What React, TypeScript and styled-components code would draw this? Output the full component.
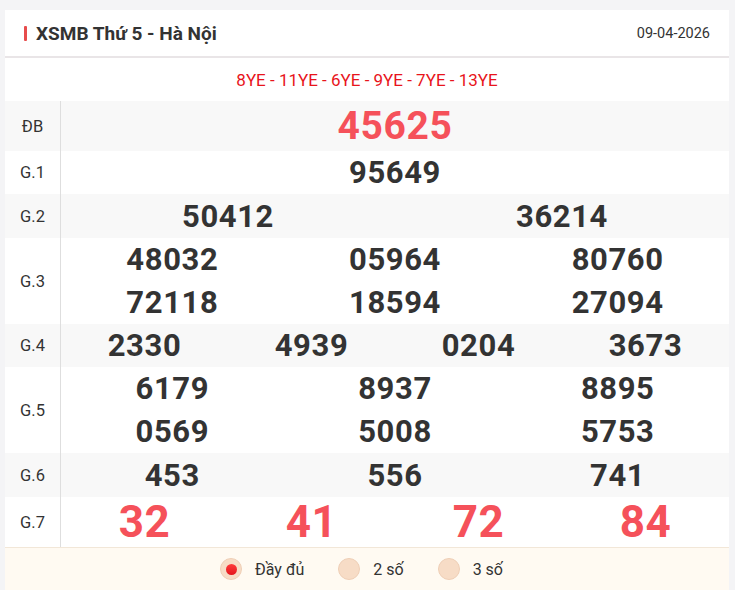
import React from "react";
import styled, { createGlobalStyle } from "styled-components";

const Global = createGlobalStyle`
  html, body { margin: 0; padding: 0; background: #f4f4f6; }
  body { font-family: Roboto, "Noto Sans", sans-serif; color: #333; }
`;

const Page = styled.div`
  padding: 10px 6px 0 5px;
`;

const Card = styled.div`
  background: #fff;
`;

const Header = styled.div`
  display: flex;
  align-items: center;
  justify-content: space-between;
  height: 46px;
  padding: 0 19px 0 19px;
  border-bottom: 2px solid #e9e5e7;
`;

const Title = styled.h2`
  margin: 0;
  display: flex;
  align-items: center;
  gap: 9px;
  font-size: 19px;
  font-weight: 700;
  color: #333;
  &::before {
    content: "";
    width: 3px;
    height: 15px;
    background: #e74c4c;
    border-radius: 1px;
  }
`;

const DateText = styled.span`
  font-size: 14.5px;
  color: #333;
`;

const Codes = styled.div`
  height: 43px;
  display: flex;
  align-items: center;
  justify-content: center;
  font-size: 17px;
  color: #e8141b;
`;

const Table = styled.div`
  display: grid;
  grid-template-columns: 56px 1fr;
`;

const Row = styled.div<{ $alt: boolean }>`
  display: contents;
  & > * {
    background: ${(p) => (p.$alt ? "#f8f8f8" : "#fff")};
  }
`;

const Label = styled.div`
  display: flex;
  align-items: center;
  justify-content: center;
  border-right: 1px solid #dedede;
  font-size: 16.5px;
  color: #333;
`;

const Cells = styled.div<{ $cols: number; $h: number }>`
  display: grid;
  grid-template-columns: repeat(${(p) => p.$cols}, 1fr);
  grid-auto-rows: ${(p) => p.$h}px;
`;

const Num = styled.div<{ $size: number; $red: boolean }>`
  display: flex;
  align-items: center;
  justify-content: center;
  font-size: ${(p) => p.$size}px;
  font-weight: 700;
  color: ${(p) => (p.$red ? "#f5515a" : "#333")};
  letter-spacing: 0.6px;
`;

const Footer = styled.div`
  height: 42px;
  background: #fffaf2;
  border-top: 1px solid #f2e7d8;
  display: flex;
  align-items: center;
  justify-content: center;
  gap: 34px;
  padding-right: 11px;
`;

const Option = styled.label`
  display: flex;
  align-items: center;
  gap: 13px;
  font-size: 16px;
  color: #333;
`;

const Radio = styled.span<{ $on: boolean }>`
  width: 22px;
  height: 22px;
  border-radius: 50%;
  box-sizing: border-box;
  background: #f7dcc6;
  border: 1px solid #efcfb6;
  display: flex;
  align-items: center;
  justify-content: center;
  &::after {
    content: "";
    display: ${(p) => (p.$on ? "block" : "none")};
    width: 11px;
    height: 11px;
    border-radius: 50%;
    background: linear-gradient(#ff3b3b, #e3161c);
  }
`;

type Prize = { label: string; cols: number; nums: string[]; size: number; red?: boolean; h: number };

const prizes: Prize[] = [
  { label: "ĐB", cols: 1, nums: ["45625"], size: 39, red: true, h: 50 },
  { label: "G.1", cols: 1, nums: ["95649"], size: 31, h: 43 },
  { label: "G.2", cols: 2, nums: ["50412", "36214"], size: 31, h: 44 },
  { label: "G.3", cols: 3, nums: ["48032", "05964", "80760", "72118", "18594", "27094"], size: 31, h: 43 },
  { label: "G.4", cols: 4, nums: ["2330", "4939", "0204", "3673"], size: 31, h: 43 },
  { label: "G.5", cols: 3, nums: ["6179", "8937", "8895", "0569", "5008", "5753"], size: 31, h: 43 },
  { label: "G.6", cols: 3, nums: ["453", "556", "741"], size: 31, h: 44 },
  { label: "G.7", cols: 4, nums: ["32", "41", "72", "84"], size: 44, red: true, h: 50 },
];

export default function App() {
  return (
    <Page>
      <Global />
      <Card>
        <Header>
          <Title>XSMB Thứ 5 - Hà Nội</Title>
          <DateText>09-04-2026</DateText>
        </Header>
        <Codes>8YE - 11YE - 6YE - 9YE - 7YE - 13YE</Codes>
        <Table>
          {prizes.map((p, i) => (
            <Row key={p.label} $alt={i % 2 === 0}>
              <Label>{p.label}</Label>
              <Cells $cols={p.cols} $h={p.h}>
                {p.nums.map((n, j) => (
                  <Num key={j} $size={p.size} $red={!!p.red}>
                    {n}
                  </Num>
                ))}
              </Cells>
            </Row>
          ))}
        </Table>
        <Footer>
          <Option>
            <Radio $on />
            Đầy đủ
          </Option>
          <Option>
            <Radio $on={false} />
            2 số
          </Option>
          <Option>
            <Radio $on={false} />
            3 số
          </Option>
        </Footer>
      </Card>
    </Page>
  );
}
